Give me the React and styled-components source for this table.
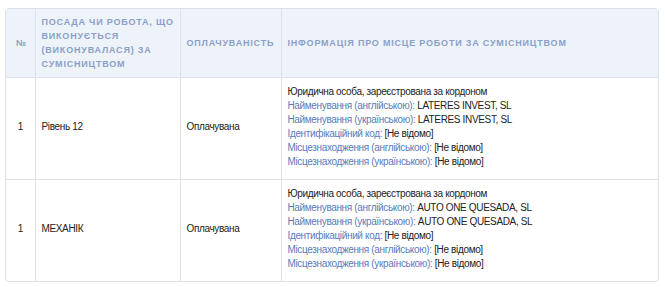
import React from 'react';
import styled, { createGlobalStyle } from 'styled-components';

const GlobalStyle = createGlobalStyle`
  body {
    margin: 0;
    padding: 8px 6px 0 5px;
    background: #fff;
    font-family: "Liberation Sans", Arial, sans-serif;
  }
`;

const Wrapper = styled.div`
  border: 1px solid #dde2e8;
  border-radius: 4px;
  overflow: hidden;
`;

const Table = styled.table`
  width: 100%;
  border-collapse: collapse;
  table-layout: fixed;
`;

const Th = styled.th`
  background: #eef3fa;
  color: #8aa0c8;
  font-size: 9px;
  font-weight: bold;
  letter-spacing: 0.8px;
  line-height: 14px;
  text-transform: uppercase;
  text-align: ${(p) => (p.$center ? 'center' : 'left')};
  vertical-align: middle;
  padding: 6px 4px 6px 6px;
  border-left: 1px solid #dde2e8;
  &:first-child {
    border-left: none;
  }
`;

const Td = styled.td`
  color: #222;
  font-size: 10px;
  letter-spacing: -0.35px;
  line-height: 14px;
  text-align: ${(p) => (p.$center ? 'center' : 'left')};
  vertical-align: middle;
  padding: 7px 6px 10px;
  border-left: 1px solid #dde2e8;
  border-top: 1px solid #dde2e8;
  &:first-child {
    border-left: none;
  }
`;

const Line = styled.div`
  white-space: nowrap;
`;

const Label = styled.span`
  color: #5a7bbb;
`;

const rows = [
  { n: 1, job: 'Рівень 12', paid: 'Оплачувана', name: 'LATERES INVEST, SL' },
  { n: 1, job: 'МЕХАНІК', paid: 'Оплачувана', name: 'AUTO ONE QUESADA, SL' },
];

const Info = ({ name }) => (
  <>
    <Line>Юридична особа, зареєстрована за кордоном</Line>
    <Line><Label>Найменування (англійською):</Label> {name}</Line>
    <Line><Label>Найменування (українською):</Label> {name}</Line>
    <Line><Label>Ідентифікаційний код:</Label> [Не відомо]</Line>
    <Line><Label>Місцезнаходження (англійською):</Label> [Не відомо]</Line>
    <Line><Label>Місцезнаходження (українською):</Label> [Не відомо]</Line>
  </>
);

const App = () => (
  <>
    <GlobalStyle />
    <Wrapper>
      <Table>
        <colgroup>
          <col style={{ width: 29 }} />
          <col style={{ width: 145 }} />
          <col style={{ width: 101 }} />
          <col />
        </colgroup>
        <thead>
          <tr>
            <Th $center>№</Th>
            <Th>Посада чи робота, що виконується (виконувалася) за сумісництвом</Th>
            <Th>Оплачуваність</Th>
            <Th>Інформація про місце роботи за сумісництвом</Th>
          </tr>
        </thead>
        <tbody>
          {rows.map((r, i) => (
            <tr key={i}>
              <Td $center>{r.n}</Td>
              <Td>{r.job}</Td>
              <Td>{r.paid}</Td>
              <Td><Info name={r.name} /></Td>
            </tr>
          ))}
        </tbody>
      </Table>
    </Wrapper>
  </>
);

export default App;
